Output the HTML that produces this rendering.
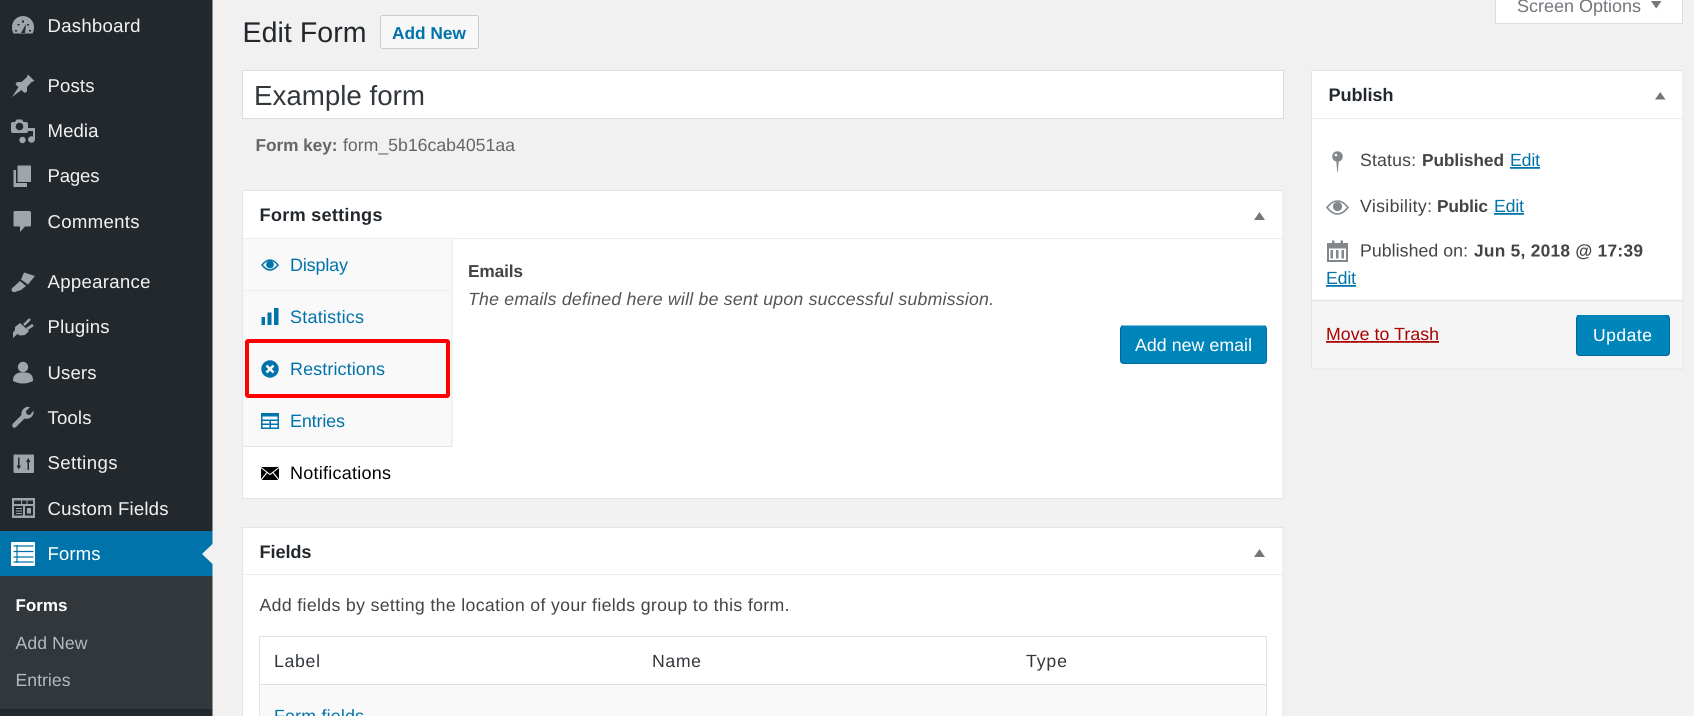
<!DOCTYPE html>
<html lang="en"><head><meta charset="utf-8"><title>Edit Form</title>
<style>
html,body{margin:0;padding:0;width:1694px;height:716px;overflow:hidden;background:#f1f1f1}
svg{display:block;filter:blur(.35px)}
text{font-family:"Liberation Sans",sans-serif;font-size:17.7px;fill:#444;text-rendering:geometricPrecision}
text.m{font-size:18.6px;fill:#eef0f1}
text.s{font-size:17.6px;fill:#b4b9be}
text.t{font-size:18px;fill:#0073aa}
text.h{font-size:18.2px;font-weight:bold;fill:#23282d}
text.b{font-weight:bold;font-size:17.3px}
text.l{fill:#0073aa;text-decoration:underline}
.ic{fill:#a0a5aa}
</style></head><body>
<svg xmlns="http://www.w3.org/2000/svg" width="1694" height="716" viewBox="0 0 1694 716">
<rect width="1694" height="716" fill="#f1f1f1"/>
<!-- sidebar -->
<rect width="212.500" height="716" fill="#23282d"/>
<rect y="531" width="212.500" height="45" fill="#0073aa"/>
<rect y="576" width="212.500" height="133" fill="#32373c"/>
<path d="M212.500 544L202 554L212.500 564Z" fill="#f1f1f1"/>
<g class="ic">
<path d="M13.500 33.500Q12 31 12 27A11 11 0 0 1 34 27Q34 31 32.500 33.500Z"/>
<path d="M28 74.500L34.500 81L31.500 82L27 87L27 91.500L24.500 93L21.500 90L12 97L18.500 87L15.500 84.500L17 82L21.500 82L26.500 77.500Z"/>
<path d="M11 124Q11 122 13 122H15L16.500 119.500H22L23.500 122H26Q28 122 28 124V131Q28 133 26 133H13Q11 133 11 131Z"/>
<path d="M33 128H35V139.500A3.500 3.200 0 1 1 31.500 136.300Q32.500 136.300 33 136.600V131H28V128Z"/>
<circle cx="22.500" cy="140" r="3.200"/>
<path d="M13.500 170H27V187H13.500Z"/>
<path d="M16 165.500H31V183H16Z" fill="#23282d"/>
<path d="M17.500 165.500H31V182H17.500Z"/>
<path d="M15 211H29.500Q31 211 31 212.500V225Q31 226.500 29.500 226.500H25L20 232V226.500H15Q13.500 226.500 13.500 225V212.500Q13.500 211 15 211Z"/>
<path d="M24 272.500L35 276L28 284.500L21 279.500Z"/>
<path d="M20 281L26 286L21 290L15 292Q12 292.500 11.500 290Q11.500 288 14 286.500Z"/>
<path d="M20 323L29 331L25 335L20 335.500L17.500 334L13 338L13 332.500L15 330L15 327Z"/>
<path d="M24 325L30 319M27 329L33 325" stroke="#a0a5aa" stroke-width="2.600" fill="none"/>
<circle cx="23" cy="367" r="5.200"/>
<path d="M13 380C13 375 17 373 20 372.500H26C30 373 33 375 33 380V381Q28 383.500 23 383.500Q18 383.500 13 381Z"/>
<path d="M33.500 410.500A7 7 0 0 1 24.500 418.500L16 427Q14 428.500 12.800 427Q11.500 425.500 13 423.500L21.500 415A7 7 0 0 1 30 407L25.800 411.500L27 414.500L30 415Z"/>
<rect x="13.500" y="454.500" width="20.500" height="18.500" rx="1"/>
<path d="M12 498H35V518H12Z"/>
</g>
<g fill="#23282d">
<path d="M15 30h2v1.500h-2zM17.500 24h2v1.500h-2zM22 20.500h2v2h-2zM27 24h2v1.500h-2zM29 30h2v1.500h-2z"/>
<path d="M21 33L26 24L25 33Z"/>
<circle cx="19.500" cy="126.500" r="3.800"/>
<path d="M18 457.500h1.500v8h1.500l-2.250 4l-2.250-4h1.500z"/>
<path d="M27.500 470h1.500v-8h1.500l-2.250-4l-2.250 4h1.500z"/>
<path d="M14 500.500h19v3.500h-19zM14 506h9v9.500h-9zM25 506h8v9.500h-8z"/>
</g>
<path d="M21.500 500.500v3.500M27 500.500v3.500M16 508.500h6M16 511h6M16 513.500h6" stroke="#a0a5aa" stroke-width="1" fill="none"/>
<rect x="27" y="508" width="4" height="5.500" fill="#a0a5aa"/>
<rect x="11" y="542" width="24" height="24" rx="1" fill="#fff"/>
<path d="M13.500 546h20M13.500 551.500h20M13.500 557h20M13.500 562h20M17 545v18" stroke="#0073aa" stroke-width="1.200" fill="none"/>
<text class="m" x="47.500" y="32" textLength="93">Dashboard</text>
<text class="m" x="47.500" y="92" textLength="47">Posts</text>
<text class="m" x="47.500" y="137" textLength="51">Media</text>
<text class="m" x="47.500" y="182" textLength="52">Pages</text>
<text class="m" x="47.500" y="228" textLength="92">Comments</text>
<text class="m" x="47.500" y="288" textLength="103">Appearance</text>
<text class="m" x="47.500" y="333" textLength="62">Plugins</text>
<text class="m" x="47.500" y="379" textLength="49">Users</text>
<text class="m" x="47.500" y="424" textLength="44">Tools</text>
<text class="m" x="47.500" y="469" textLength="70">Settings</text>
<text class="m" x="47.500" y="515" textLength="121">Custom Fields</text>
<text class="m" x="47.500" y="560" textLength="53" style="fill:#fff">Forms</text>
<text class="s" x="15.500" y="611" textLength="52" style="fill:#fff;font-weight:bold;font-size:17px">Forms</text>
<text class="s" x="15.500" y="649" textLength="72">Add New</text>
<text class="s" x="15.500" y="686" textLength="55">Entries</text>
<!-- heading -->
<text x="242.500" y="42" textLength="124" style="font-size:28.500px;fill:#23282d">Edit Form</text>
<rect x="380.500" y="15.500" width="98" height="33" rx="2" fill="#f7f7f7" stroke="#ccc"/>
<text class="b" x="392" y="39" textLength="74" style="fill:#0073aa">Add New</text>
<!-- screen options -->
<rect x="1495.500" y="-3" width="187" height="26.500" fill="#fff" stroke="#dcdcdc"/>
<text x="1517" y="12" textLength="124" style="fill:#72777c;font-size:18px">Screen Options</text>
<path d="M1651 1H1661.500L1656.200 8.500Z" fill="#72777c"/>
<!-- title -->
<rect x="242.500" y="70.500" width="1041" height="48" fill="#fff" stroke="#ddd"/>
<text x="254" y="105" textLength="171" style="font-size:27.700px;fill:#32373c">Example form</text>
<text class="b" x="255.500" y="151" textLength="82" style="fill:#666">Form key:</text>
<text x="343" y="151" textLength="172" style="fill:#666">form_5b16cab4051aa</text>
<!-- form settings -->
<rect x="242.500" y="190.500" width="1040.500" height="308" fill="#fff" stroke="#e5e5e5"/>
<path d="M243 238.500H1283" stroke="#eee"/>
<rect x="243" y="239" width="209" height="207.500" fill="#f9f9f9"/>
<path d="M452 239V446.500M243 446.500H452" stroke="#e5e5e5"/>
<path d="M243 290.500H452M243 342.500H452M243 394.500H452" stroke="#eee"/>
<text class="h" x="259.500" y="221" textLength="123">Form settings</text>
<path d="M1254 220H1265L1259.500 212Z" fill="#72777c"/>
<!-- tab icons -->
<path d="M262 265Q266 260 270 260Q274 260 278 265Q274 270 270 270Q266 270 262 265Z" fill="#f9f9f9" stroke="#0073aa" stroke-width="1.500"/>
<circle cx="270" cy="264.500" r="3.900" fill="#0073aa"/>
<path d="M261.500 317h3.500v8h-3.500zM267.500 312.500h4v12.500h-4zM274 308h4.500v17h-4.500z" fill="#0073aa"/>
<circle cx="270" cy="369" r="8.700" fill="#0073aa"/>
<path d="M266.500 365.500L273.500 372.500M273.500 365.500L266.500 372.500" stroke="#f9f9f9" stroke-width="2.600" fill="none"/>
<rect x="261" y="413" width="18" height="16" fill="#0073aa"/>
<path d="M262.500 416.500h15v3h-15zM262.500 421h7v2.500h-7zM271 421h6.500v2.500H271zM262.500 425h7v2.500h-7zM271 425h6.500v2.500H271z" fill="#f9f9f9"/>
<rect x="261" y="467" width="18" height="13" rx="1" fill="#000"/>
<path d="M261 467.500L270 474.500L279 467.500M261 480L267 472.500M279 480L273 472.500" stroke="#fff" stroke-width="1.100" fill="none"/>
<text class="t" x="290" y="271" textLength="58">Display</text>
<text class="t" x="290" y="323" textLength="74">Statistics</text>
<text class="t" x="290" y="375" textLength="95">Restrictions</text>
<text class="t" x="290" y="427" textLength="55">Entries</text>
<text class="t" x="290" y="479" textLength="101" style="fill:#000">Notifications</text>
<rect x="247" y="341" width="201" height="55" rx="1" fill="none" stroke="#fe0000" stroke-width="4"/>
<text class="b" x="468" y="277" textLength="55">Emails</text>
<text x="468" y="305" textLength="526" style="font-style:italic;fill:#555">The emails defined here will be sent upon successful submission.</text>
<rect x="1120.500" y="326" width="146" height="37.500" rx="3" fill="#0085ba" stroke="#006799"/>
<path d="M1121 326H1266" stroke="#0085ba"/>
<text x="1135" y="351" textLength="117" style="fill:#fff">Add new email</text>
<!-- fields -->
<rect x="242.500" y="527.500" width="1040.500" height="200" fill="#fff" stroke="#e5e5e5"/>
<path d="M243 574.500H1283" stroke="#eee"/>
<text class="h" x="259.500" y="558" textLength="52">Fields</text>
<path d="M1254 557H1265L1259.500 549Z" fill="#72777c"/>
<text x="259.500" y="611" textLength="530">Add fields by setting the location of your fields group to this form.</text>
<rect x="259.500" y="636.500" width="1007" height="100" fill="#f9f9f9" stroke="#e1e1e1"/>
<rect x="260" y="637" width="1006" height="47" fill="#fff"/>
<path d="M260 684.500H1266" stroke="#e1e1e1"/>
<text x="274" y="667" textLength="46" style="fill:#32373c">Label</text>
<text x="652" y="667" textLength="49" style="fill:#32373c">Name</text>
<text x="1026" y="667" textLength="41" style="fill:#32373c">Type</text>
<text x="274" y="722" textLength="90" style="fill:#0073aa">Form fields</text>
<!-- publish -->
<rect x="1311.500" y="70.500" width="371.500" height="298.500" fill="#fff" stroke="#e5e5e5"/>
<path d="M1312 118.500H1683" stroke="#eee"/>
<rect x="1312" y="300" width="370.500" height="68.500" fill="#f5f5f5"/>
<path d="M1312 300.500H1683" stroke="#e5e5e5" stroke-width="1.500"/>
<text class="h" x="1328.500" y="101" textLength="65">Publish</text>
<path d="M1655 99.500H1665.500L1660.200 92Z" fill="#72777c"/>
<circle cx="1337.500" cy="156.500" r="5.300" fill="#82878c"/>
<circle cx="1336" cy="155" r="1.300" fill="#fff"/>
<path d="M1336.200 160H1338.800L1337.800 172H1337.200Z" fill="#82878c"/>
<path d="M1327 207.500Q1332 201 1337.500 201Q1343 201 1348 207.500Q1343 214 1337.500 214Q1332 214 1327 207.500Z" fill="#fff" stroke="#82878c" stroke-width="1.600"/>
<circle cx="1337.500" cy="206.500" r="4.600" fill="#82878c"/>
<path d="M1327 243H1332V240.500H1334.500V243H1340.500V240.500H1343V243H1348V262H1327ZM1329 248.500V260H1346V248.500Z" fill="#82878c" fill-rule="evenodd"/>
<path d="M1330.500 250h2.500v8.500h-2.500zM1336 250h2.500v8.500h-2.500zM1341.500 250h2.500v8.500h-2.500z" fill="#82878c"/>
<text x="1360" y="166" textLength="56">Status:</text>
<text class="b" x="1422" y="166" textLength="82">Published</text>
<text class="l" x="1510" y="166" textLength="30">Edit</text>
<text x="1360" y="212" textLength="72">Visibility:</text>
<text class="b" x="1437" y="212" textLength="51">Public</text>
<text class="l" x="1494" y="212" textLength="30">Edit</text>
<text x="1360" y="256.500" textLength="108">Published on:</text>
<text class="b" x="1474" y="256.500" textLength="169">Jun 5, 2018 @ 17:39</text>
<text class="l" x="1326" y="284" textLength="30">Edit</text>
<text x="1326" y="340" textLength="113" style="fill:#a00;text-decoration:underline">Move to Trash</text>
<rect x="1576.500" y="315.500" width="93" height="40" rx="3" fill="#0085ba" stroke="#006799"/>
<path d="M1577 315.500H1669" stroke="#0085ba"/>
<text x="1593" y="341" textLength="59" style="fill:#fff;font-size:17.500px">Update</text>
</svg>
</body></html>
